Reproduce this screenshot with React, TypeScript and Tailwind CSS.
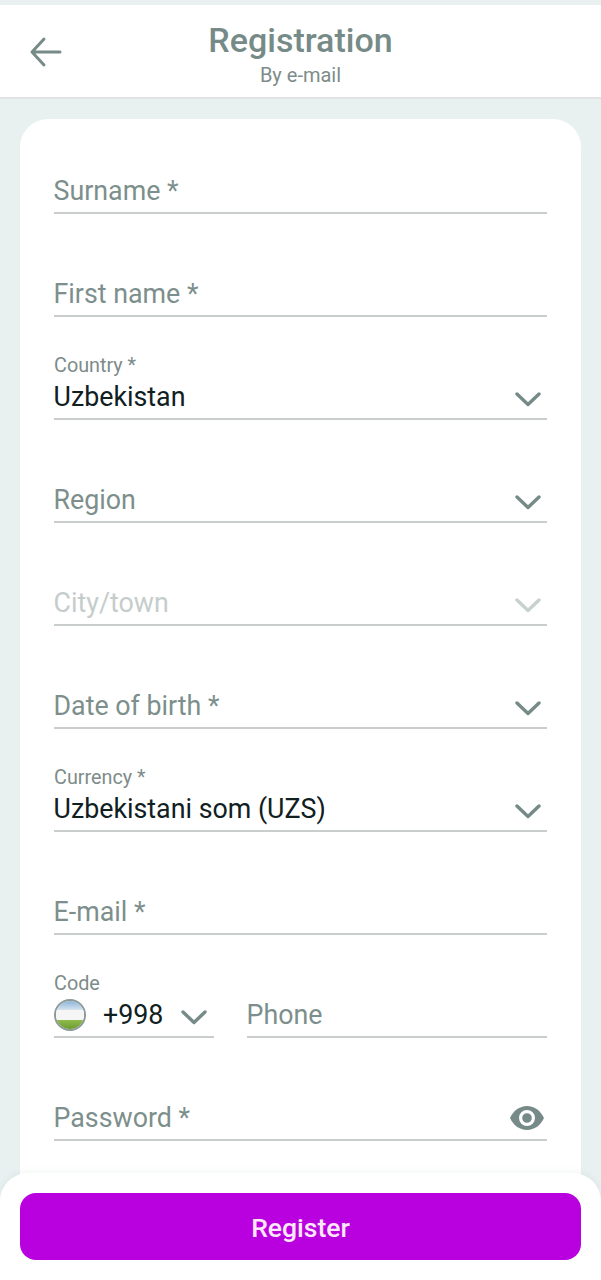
import type { ReactNode } from "react";

function Chevron({ light = false }: { light?: boolean }) {
  return (
    <svg width="26" height="16" viewBox="0 0 26 16" fill="none" className="mt-[3px] shrink-0">
      <path
        d="M2 3l11 10.5L24 3"
        stroke={light ? "#c9d1d0" : "#768b88"}
        strokeWidth="3.4"
        strokeLinecap="round"
        strokeLinejoin="round"
      />
    </svg>
  );
}

function Field({
  label,
  value,
  placeholder,
  muted = false,
  right,
  className = "h-[103px]",
}: {
  label?: string;
  value?: string;
  placeholder?: string;
  muted?: boolean;
  right?: ReactNode;
  className?: string;
}) {
  return (
    <div className={`flex flex-col justify-end ${className}`}>
      {label ? (
        <span className="text-[19.8px] leading-[25px] text-[#7d8c8a]">{label}</span>
      ) : null}
      <div className="flex h-[42px] items-center justify-between border-b-2 border-[#c9cdcc] pb-[2px] pr-[6px]">
        {value ? (
          <span className="-ml-[0.5px] text-[26.8px] text-[#10201f]">{value}</span>
        ) : (
          <span className={`-ml-[0.5px] text-[26.8px] ${muted ? "text-[#c5cdcc]" : "text-[#7d8f8c]"}`}>
            {placeholder}
          </span>
        )}
        {right}
      </div>
    </div>
  );
}

function FlagUz() {
  return (
    <div className="flex h-[32px] w-[32px] shrink-0 flex-col overflow-hidden rounded-full border-2 border-[#8c9a98]">
      <div className="h-[9px] bg-gradient-to-b from-[#8fb4d6] to-[#d5e4f0]" />
      <div className="h-[10px] bg-[#f6f6f6]" />
      <div className="flex-1 bg-gradient-to-b from-[#8fbb4a] to-[#6d9c33]" />
    </div>
  );
}

export default function App() {
  return (
    <div className="relative h-[1280px] w-[601px] overflow-hidden bg-[#e8f0f0] pt-[5px] font-['Roboto',sans-serif]">
      <header className="relative flex h-[94px] flex-col items-center border-b-2 border-[#e0e4e4] bg-white pt-[15px]">
        <svg
          width="36"
          height="32"
          viewBox="0 0 36 32"
          fill="none"
          className="absolute left-[28px] top-[31px]"
        >
          <path
            d="M32 16H4M16 3L4 16l12 13"
            stroke="#768b88"
            strokeWidth="3"
            strokeLinecap="round"
            strokeLinejoin="round"
          />
        </svg>
        <h1 className="text-[34px] leading-[40px] font-medium text-[#768b88]">Registration</h1>
        <p className="mt-[2px] text-[20px] leading-[26px] text-[#7d8c8a]">By e-mail</p>
      </header>

      <main className="mx-[20px] mt-[20px] flex h-[1100px] flex-col rounded-[28px] bg-white px-[34px]">
        <Field placeholder="Surname *" className="h-[95px]" />
        <Field placeholder="First name *" />
        <Field label="Country *" value="Uzbekistan" right={<Chevron />} />
        <Field placeholder="Region" right={<Chevron />} />
        <Field placeholder="City/town" muted right={<Chevron light />} />
        <Field placeholder="Date of birth *" right={<Chevron />} />
        <Field label="Currency *" value="Uzbekistani som (UZS)" right={<Chevron />} />
        <Field placeholder="E-mail *" />
        <div className="flex gap-[33px]">
          <div className="flex h-[103px] w-[160px] flex-col justify-end">
            <span className="text-[19.8px] leading-[25px] text-[#7d8c8a]">Code</span>
            <div className="flex h-[42px] items-center border-b-2 border-[#c9cdcc] pb-[2px]">
              <FlagUz />
              <span className="ml-[17px] text-[26.8px] text-[#10201f]">+998</span>
              <span className="ml-[18px]">
                <Chevron />
              </span>
            </div>
          </div>
          <Field placeholder="Phone" className="h-[103px] flex-1" />
        </div>
        <Field
          placeholder="Password *"
          right={
            <svg width="34" height="24" viewBox="0 0 34 24" className="-mr-[3px] shrink-0">
              <path
                fillRule="evenodd"
                fill="#768b88"
                d="M17 0C9.500 0 3.200 4.900 0 12c3.200 7.100 9.500 12 17 12s13.800-4.900 17-12C30.800 4.900 24.500 0 17 0zm0 20a8 8 0 1 1 0-16 8 8 0 0 1 0 16zm0-3.200a4.800 4.800 0 1 0 0-9.600 4.800 4.800 0 0 0 0 9.600z"
              />
            </svg>
          }
        />
      </main>

      <footer className="absolute inset-x-0 bottom-0 h-[107px] rounded-t-[28px] bg-white px-[20px] pt-[20px] shadow-[0_-2px_6px_rgba(120,140,140,0.08)]">
        <button
          type="button"
          className="flex h-[67px] w-full items-center justify-center rounded-[16px] bg-[#b900de] pt-[2px] text-[26.5px] font-medium text-[#fde8fb]"
        >
          Register
        </button>
      </footer>
    </div>
  );
}
